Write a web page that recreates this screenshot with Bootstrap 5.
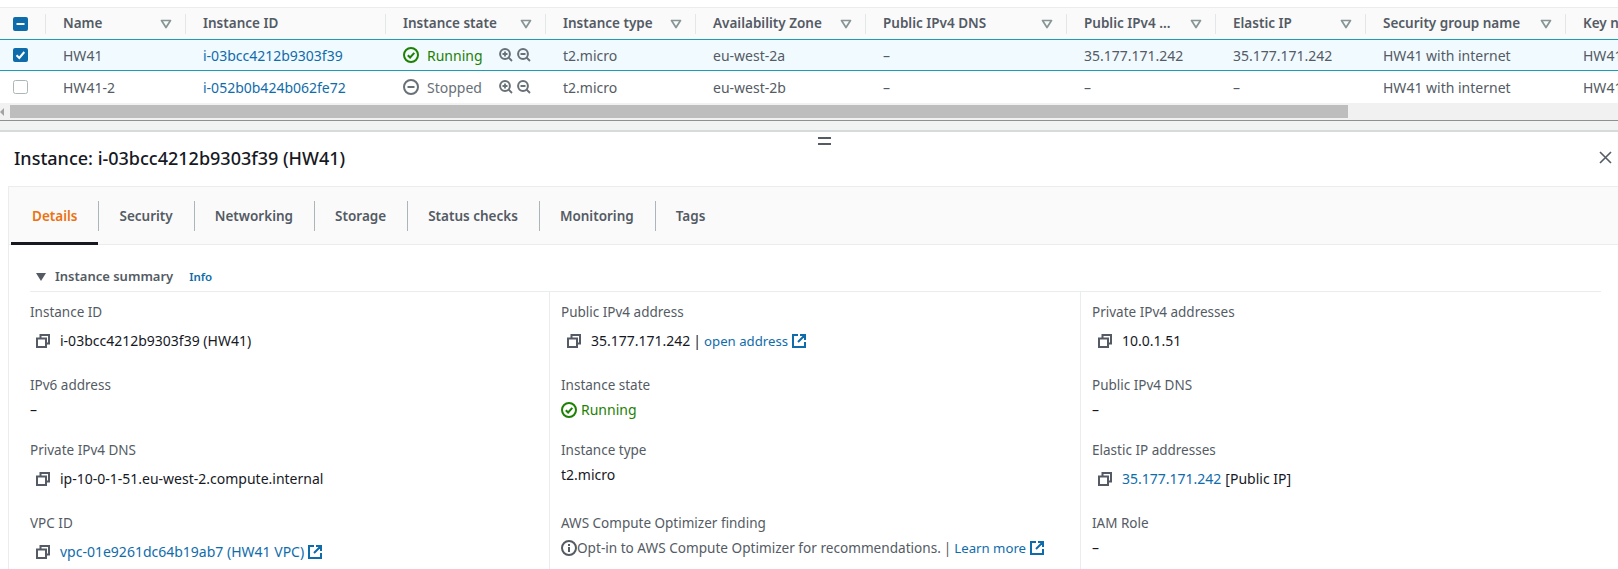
<!DOCTYPE html>
<html lang="en">
<head>
    <meta charset="UTF-8">
    <title>Instances</title>
    <meta name="viewport" content="width=device-width, initial-scale=1.0">
    <link href="https://cdn.jsdelivr.net/npm/bootstrap@5.3.2/dist/css/bootstrap.min.css" rel="stylesheet">
    <style>
        body {
            font-family: "Noto Sans", sans-serif;
            font-size: 14px;
            color: #16191f;
            background: #fff;
            height: 569px;
            overflow: hidden;
        }

        a { color: #0f6cab; text-decoration: none; }

        /* instances table */
        .table-wrap { padding-top: 7px; overflow: hidden; }
        .inst-table { table-layout: fixed; width: 1800px; margin: 0; border-collapse: separate; border-spacing: 0; }
        .inst-table th, .inst-table td { padding: 0 0 0 17px; white-space: nowrap; border: 0; color: #545b64; vertical-align: middle; background: transparent; box-shadow: none; }
        .inst-table th { height: 32px; background: #fafafa; border-top: 1px solid #eaeded; font-weight: 600; font-size: 13.5px; }
        .inst-table td { height: 32px; }
        .inst-table tr.picked td { background: #f1faff; border-top: 1px solid #1b9db5; border-bottom: 1px solid #1b9db5; height: 32px; }
        .inst-table .check-col { padding-left: 13px; }
        .head-cell { display: flex; align-items: center; justify-content: space-between; height: 20px; border-right: 1px solid #e4e7e7; padding-right: 13px; }
        .check-col .head-cell { padding: 0; }
        .c0 { width: 46px; } .c1 { width: 140px; } .c2 { width: 200px; } .c3 { width: 160px; }
        .c4 { width: 150px; } .c5 { width: 170px; } .c6 { width: 201px; } .c7 { width: 149px; }
        .c8 { width: 150px; } .c9 { width: 200px; } .c10 { width: 234px; }

        .box { display: block; width: 15px; height: 14px; }
        .state-run { color: #1d8102; }
        .state-stop { color: #687078; }
        .state-cell { display: flex; align-items: center; }
        .state-cell .state-text { margin-left: 8px; width: 72px; }
        .state-cell svg { flex: none; }

        /* fake scrollbar + split bar */
        .scroll-track { height: 17px; background: #f1f1f1; padding-top: 2px; display: flex; }
        .scroll-arrow { width: 0; height: 0; margin: 3px 6px 0 0; border-top: 4px solid transparent; border-bottom: 4px solid transparent; border-right: 4px solid #a3a3a3; }
        .scroll-thumb { width: 1338px; height: 13px; background: #bdbdbd; }
        .split-bar { height: 12px; background: #f2f3f3; border-top: 1px solid #8d9191; border-bottom: 2px solid #d5dbdb; }
        .drag-mark { height: 8px; width: 13px; margin: 5px 0 0 818px; border-top: 2px solid #545b64; border-bottom: 2px solid #545b64; }

        /* detail panel */
        .panel-head { height: 41px; padding: 0 6px 16px 14px; }
        .panel-title { font-size: 18px; font-weight: 500; margin: 0; line-height: 24px; }
        .detail-box { margin-left: 8px; border: 1px solid #eaeded; border-right: 0; border-bottom: 0; }
        .tab-strip { height: 58px; background: #fafafa; border-bottom: 1px solid #eaeded; padding-left: 2px; }
        .tab-item { height: 58px; display: flex; align-items: center; position: relative; color: #545b64; font-weight: 600; font-size: 13.5px; padding: 0 21px; }
        .tab-item + .tab-item::before { content: ""; position: absolute; left: 0; top: 14px; height: 30px; width: 1px; background: #aab7b8; }
        .tab-item.active { color: #ec7211; border-bottom: 3px solid #16191f; padding-top: 3px; }

        .summary-wrap { padding: 0 0 0 21px; }
        .summary-head { height: 47px; padding: 18px 0 0 6px; border-bottom: 1px solid #eaeded; color: #545b64; font-weight: 600; font-size: 13px; margin-right: 17px; }
        .caret-down { width: 0; height: 0; border-left: 5px solid transparent; border-right: 5px solid transparent; border-top: 8px solid #545b64; margin-right: 9px; }
        .info-link { font-size: 11.5px; font-weight: 600; margin-left: 16px; }
        .summary-grid { display: grid; grid-template-columns: 519px 531px 520px; grid-template-rows: 73px 65px 73px 73px; }
        .field { padding-top: 10px; }
        .field:not(.first-col) { border-left: 1px solid #eaeded; padding-left: 11px; }
        .field-label { color: #545b64; line-height: 20px; font-size: 13.5px; }
        .field-value { line-height: 20px; margin-top: 5px; display: flex; align-items: center; }
        .field-value.copyable { margin-top: 9px; padding-left: 6px; }
        .copy-icon { margin-right: 10px; flex: none; }
        .ext-icon { margin-left: 4px; flex: none; }
        .note-text { color: #545b64; font-size: 13.6px; }
        .text-link { font-size: 13.2px; }
        .sep-pipe { margin: 0 3px; }
    </style>
</head>
<body>
    <svg width="0" height="0" class="d-block">
        <symbol id="sort" viewBox="0 0 12 10"><path d="M1.5 1.5h9L6 8.5z" fill="none" stroke="#879596" stroke-width="1.7" stroke-linejoin="round"/></symbol>
        <symbol id="zoom-in" viewBox="0 0 14 14"><circle cx="6" cy="6" r="4.9" fill="none" stroke="#687078" stroke-width="2"/><path d="M9.5 9.5L13 13M3.5 6h5M6 3.5v5" stroke="#687078" stroke-width="1.8" fill="none"/></symbol>
        <symbol id="zoom-out" viewBox="0 0 14 14"><circle cx="6" cy="6" r="4.9" fill="none" stroke="#687078" stroke-width="2"/><path d="M9.5 9.5L13 13M3.5 6h5" stroke="#687078" stroke-width="1.8" fill="none"/></symbol>
        <symbol id="copy" viewBox="0 0 14 14"><path d="M4.5 4V1h8.500v8.500h-3M1 4.500h9v8.500H1z" fill="none" stroke="#545b64" stroke-width="2"/></symbol>
        <symbol id="ext" viewBox="0 0 14 14"><path d="M6 1H1v12h12V8M8 1h5v5M13 1L6 8" fill="none" stroke="#0f6cab" stroke-width="2"/></symbol>
        <symbol id="ok" viewBox="0 0 16 16"><circle cx="8" cy="8" r="7" fill="none" stroke="#1d8102" stroke-width="2"/><path d="M4.800 8.200l2.300 2.300 4.200-4.600" fill="none" stroke="#1d8102" stroke-width="2"/></symbol>
    </svg>

    <div class="table-wrap">
        <table class="table inst-table">
            <colgroup>
                <col class="c0"><col class="c1"><col class="c2"><col class="c3"><col class="c4"><col class="c5">
                <col class="c6"><col class="c7"><col class="c8"><col class="c9"><col class="c10">
            </colgroup>
            <thead>
                <tr>
                    <th class="check-col"><div class="head-cell">
                        <svg class="box" viewBox="0 0 15 14"><rect width="15" height="14" rx="2" fill="#0f6cab"/><path d="M3.500 7h8" stroke="#fff" stroke-width="2"/></svg>
                    </div></th>
                    <th><div class="head-cell">Name <svg width="12" height="10"><use href="#sort"/></svg></div></th>
                    <th><div class="head-cell">Instance ID</div></th>
                    <th><div class="head-cell">Instance state <svg width="12" height="10"><use href="#sort"/></svg></div></th>
                    <th><div class="head-cell">Instance type <svg width="12" height="10"><use href="#sort"/></svg></div></th>
                    <th><div class="head-cell">Availability Zone <svg width="12" height="10"><use href="#sort"/></svg></div></th>
                    <th><div class="head-cell">Public IPv4 DNS <svg width="12" height="10"><use href="#sort"/></svg></div></th>
                    <th><div class="head-cell">Public IPv4 ... <svg width="12" height="10"><use href="#sort"/></svg></div></th>
                    <th><div class="head-cell">Elastic IP <svg width="12" height="10"><use href="#sort"/></svg></div></th>
                    <th><div class="head-cell">Security group name <svg width="12" height="10"><use href="#sort"/></svg></div></th>
                    <th><div class="head-cell">Key name <svg width="12" height="10"><use href="#sort"/></svg></div></th>
                </tr>
            </thead>
            <tbody>
                <tr class="picked">
                    <td class="check-col"><svg class="box" viewBox="0 0 15 14"><rect width="15" height="14" rx="2" fill="#0f6cab"/><path d="M3.500 7.200l2.800 2.800 5-6" fill="none" stroke="#fff" stroke-width="2"/></svg></td>
                    <td>HW41</td>
                    <td><a href="#">i-03bcc4212b9303f39</a></td>
                    <td><div class="state-cell state-run"><svg width="16" height="16"><use href="#ok"/></svg><span class="state-text">Running</span><svg width="14" height="14"><use href="#zoom-in"/></svg><svg class="ms-1" width="14" height="14"><use href="#zoom-out"/></svg></div></td>
                    <td>t2.micro</td>
                    <td>eu-west-2a</td>
                    <td>–</td>
                    <td>35.177.171.242</td>
                    <td>35.177.171.242</td>
                    <td>HW41 with internet</td>
                    <td>HW41</td>
                </tr>
                <tr>
                    <td class="check-col"><svg class="box" viewBox="0 0 15 14"><rect x=".5" y=".5" width="14" height="13" rx="2" fill="#fff" stroke="#aab7b8"/></svg></td>
                    <td>HW41-2</td>
                    <td><a href="#">i-052b0b424b062fe72</a></td>
                    <td><div class="state-cell state-stop"><svg width="16" height="16" viewBox="0 0 16 16"><circle cx="8" cy="8" r="7" fill="none" stroke="#687078" stroke-width="2"/><path d="M4.500 8h7" stroke="#687078" stroke-width="2"/></svg><span class="state-text">Stopped</span><svg width="14" height="14"><use href="#zoom-in"/></svg><svg class="ms-1" width="14" height="14"><use href="#zoom-out"/></svg></div></td>
                    <td>t2.micro</td>
                    <td>eu-west-2b</td>
                    <td>–</td>
                    <td>–</td>
                    <td>–</td>
                    <td>HW41 with internet</td>
                    <td>HW41</td>
                </tr>
            </tbody>
        </table>
    </div>
    <div class="scroll-track"><span class="scroll-arrow"></span><div class="scroll-thumb"></div></div>
    <div class="split-bar"></div>
    <div class="drag-mark"></div>

    <div class="panel-head d-flex align-items-center justify-content-between">
        <h2 class="panel-title">Instance: i-03bcc4212b9303f39 (HW41)</h2>
        <svg width="13" height="13" viewBox="0 0 13 13"><path d="M1 1l11 11M12 1L1 12" stroke="#545b64" stroke-width="1.600"/></svg>
    </div>

    <div class="detail-box">
        <div class="tab-strip d-flex">
            <div class="tab-item active">Details</div>
            <div class="tab-item">Security</div>
            <div class="tab-item">Networking</div>
            <div class="tab-item">Storage</div>
            <div class="tab-item">Status checks</div>
            <div class="tab-item">Monitoring</div>
            <div class="tab-item">Tags</div>
        </div>
        <div class="summary-wrap">
            <div class="summary-head d-flex align-items-center">
                <span class="caret-down"></span>Instance summary <a class="info-link" href="#">Info</a>
            </div>
            <div class="summary-grid">
                <div class="field first-col">
                    <div class="field-label">Instance ID</div>
                    <div class="field-value copyable"><svg class="copy-icon" width="14" height="14"><use href="#copy"/></svg>i-03bcc4212b9303f39 (HW41)</div>
                </div>
                <div class="field">
                    <div class="field-label">Public IPv4 address</div>
                    <div class="field-value copyable"><svg class="copy-icon" width="14" height="14"><use href="#copy"/></svg>35.177.171.242<span class="sep-pipe">|</span><a class="text-link" href="#">open address</a><svg class="ext-icon" width="14" height="14"><use href="#ext"/></svg></div>
                </div>
                <div class="field">
                    <div class="field-label">Private IPv4 addresses</div>
                    <div class="field-value copyable"><svg class="copy-icon" width="14" height="14"><use href="#copy"/></svg>10.0.1.51</div>
                </div>

                <div class="field first-col">
                    <div class="field-label">IPv6 address</div>
                    <div class="field-value">–</div>
                </div>
                <div class="field">
                    <div class="field-label">Instance state</div>
                    <div class="field-value state-run"><svg class="me-1" width="16" height="16"><use href="#ok"/></svg>Running</div>
                </div>
                <div class="field">
                    <div class="field-label">Public IPv4 DNS</div>
                    <div class="field-value">–</div>
                </div>

                <div class="field first-col">
                    <div class="field-label">Private IPv4 DNS</div>
                    <div class="field-value copyable"><svg class="copy-icon" width="14" height="14"><use href="#copy"/></svg>ip-10-0-1-51.eu-west-2.compute.internal</div>
                </div>
                <div class="field">
                    <div class="field-label">Instance type</div>
                    <div class="field-value">t2.micro</div>
                </div>
                <div class="field">
                    <div class="field-label">Elastic IP addresses</div>
                    <div class="field-value copyable"><svg class="copy-icon" width="14" height="14"><use href="#copy"/></svg><a class="me-1" href="#">35.177.171.242</a>[Public IP]</div>
                </div>

                <div class="field first-col">
                    <div class="field-label">VPC ID</div>
                    <div class="field-value copyable"><svg class="copy-icon" width="14" height="14"><use href="#copy"/></svg><a href="#">vpc-01e9261dc64b19ab7 (HW41 VPC)</a><svg class="ext-icon" width="14" height="14"><use href="#ext"/></svg></div>
                </div>
                <div class="field">
                    <div class="field-label">AWS Compute Optimizer finding</div>
                    <div class="field-value note-text"><svg width="16" height="16" viewBox="0 0 16 16"><circle cx="8" cy="8" r="7" fill="none" stroke="#545b64" stroke-width="2"/><path d="M8 7v5M8 4v2" stroke="#545b64" stroke-width="2"/></svg>Opt-in to AWS Compute Optimizer for recommendations.<span class="sep-pipe">|</span><a class="text-link" href="#">Learn more</a><svg class="ext-icon" width="14" height="14"><use href="#ext"/></svg></div>
                </div>
                <div class="field">
                    <div class="field-label">IAM Role</div>
                    <div class="field-value">–</div>
                </div>
            </div>
        </div>
    </div>

    <script src="https://cdn.jsdelivr.net/npm/bootstrap@5.3.2/dist/js/bootstrap.bundle.min.js"></script>
</body>
</html>
